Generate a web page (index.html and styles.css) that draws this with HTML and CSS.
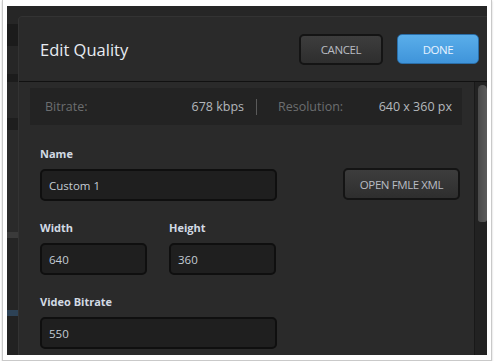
FILE: index.html
```html
<!DOCTYPE html>
<html lang="en">
<head>
    <meta charset="UTF-8">
    <title>Edit Quality</title>
    <link rel="stylesheet" href="styles.css">
</head>
<body>
    <div class="card">
        <div class="screen">
            <div class="dialog">
                <div class="dialog-header">
                    <h1>Edit Quality</h1>
                    <div class="actions">
                        <button class="btn">CANCEL</button>
                        <button class="btn btn-primary">DONE</button>
                    </div>
                </div>
                <div class="dialog-body">
                    <div class="content">
                        <div class="stats">
                            <div class="stat">
                                <span class="stat-label">Bitrate:</span>
                                <span class="stat-value">678 kbps</span>
                            </div>
                            <div class="sep"></div>
                            <div class="stat">
                                <span class="stat-label">Resolution:</span>
                                <span class="stat-value">640 x 360 px</span>
                            </div>
                        </div>
                        <div class="form">
                            <div class="row">
                                <div class="field">
                                    <label>Name</label>
                                    <div class="input wide">Custom 1</div>
                                </div>
                                <button class="btn btn-xml">OPEN FMLE XML</button>
                            </div>
                            <div class="row">
                                <div class="field">
                                    <label>Width</label>
                                    <div class="input small">640</div>
                                </div>
                                <div class="field">
                                    <label>Height</label>
                                    <div class="input small">360</div>
                                </div>
                            </div>
                            <div class="row">
                                <div class="field">
                                    <label>Video Bitrate</label>
                                    <div class="input wide">550</div>
                                </div>
                            </div>
                        </div>
                    </div>
                    <div class="scrollbar">
                        <div class="thumb"></div>
                    </div>
                </div>
            </div>
        </div>
    </div>
</body>
</html>
```

FILE: styles.css
```css
body {
    margin: 0;
    background-color: #fff;
    font-family: "Open Sans", "Liberation Sans", sans-serif;
}

.card {
    margin-left: 2px;
    width: 490px;
    box-sizing: border-box;
    padding: 6px 3px 5px 4px;
    border: 1px solid #c9c9c9;
    border-top: none;
    background-color: #fff;
    box-shadow: 0 1px 2px rgba(0, 0, 0, 0.2);
}

.screen {
    width: 480px;
    height: 349px;
    overflow: hidden;
    background: linear-gradient(to bottom,
        #262626 0, #262626 18px,
        #1b1b1b 18px, #1b1b1b 40px,
        #262626 40px, #262626 68px,
        #1c1c1c 68px, #1c1c1c 76px,
        #282828 76px, #282828 112px,
        #1e1e1e 112px, #1e1e1e 124px,
        #2a2a2a 124px, #2a2a2a 226px,
        #3a3a3a 226px, #3a3a3a 232px,
        #252525 232px, #252525 304px,
        #2d4256 304px, #2d4256 310px,
        #222 310px);
    padding: 11px 0 0 12px;
    box-sizing: border-box;
}

.dialog {
    height: 100%;
    background-color: #2a2a2a;
    border-top-left-radius: 3px;
    box-shadow: -1px 0 0 #333, 0 -1px 0 #333;
    display: flex;
    flex-direction: column;
}

.dialog-header {
    height: 64px;
    flex-shrink: 0;
    display: flex;
    align-items: center;
    justify-content: space-between;
    padding: 0 8px 0 21px;
    border-bottom: 1px solid #111;
}

.dialog-header h1 {
    margin: 0;
    font-size: 16.5px;
    font-weight: normal;
    color: #e8ecf2;
}

.actions {
    display: flex;
    gap: 14px;
    align-items: center;
}

.btn {
    font-family: "Open Sans", "Liberation Sans", sans-serif;
    font-size: 11.5px;
    letter-spacing: -0.4px;
    color: #b8bcc2;
    background: linear-gradient(#3d3d3d, #2e2e2e);
    border: 2px solid #141414;
    border-radius: 5px;
    width: 84px;
    height: 31px;
    padding: 0;
}

.btn-primary {
    width: 82px;
    height: 30px;
    color: #e8f3ff;
    background: linear-gradient(#5aaeea, #3f94da);
    border: 1px solid #2a6ea8;
}

.dialog-body {
    flex: 1;
    display: flex;
    min-height: 0;
}

.content {
    flex: 1;
    padding: 6px 12px 0 11px;
}

.stats {
    height: 37px;
    background-color: #232323;
    display: flex;
    align-items: center;
    padding: 0 10px 0 15px;
    font-size: 12.5px;
}

.stat {
    display: flex;
    justify-content: space-between;
}

.stat:first-child {
    width: 199px;
}

.stat:last-child {
    flex: 1;
}

.stat-label {
    color: #6c6e70;
}

.stat-value {
    color: #b4b8bc;
}

.sep {
    width: 1px;
    height: 16px;
    background-color: #5a5a5a;
    margin: 0 21px 0 12px;
}

.form {
    padding: 22px 0 0 10px;
}

.row {
    display: flex;
    align-items: flex-end;
    gap: 22px;
    margin-bottom: 20px;
}

.field label {
    display: block;
    font-size: 11px;
    font-weight: bold;
    color: #d2dae4;
    line-height: 14px;
    margin-bottom: 8px;
}

.input {
    height: 32px;
    box-sizing: border-box;
    background-color: #1f1f1f;
    border: 2px solid #0f0f0f;
    border-radius: 5px;
    padding: 0 7px;
    display: flex;
    align-items: center;
    font-size: 11.5px;
    color: #c4ccd4;
}

.input.wide {
    width: 237px;
}

.input.small {
    width: 107px;
}

.btn-xml {
    width: 117px;
    height: 32px;
    margin-left: 44px;
    margin-bottom: 1px;
}

.scrollbar {
    width: 13px;
    border-left: 1px solid #191919;
    background-color: #222;
    padding: 3px 0 0 3px;
    box-sizing: border-box;
}

.thumb {
    width: 9px;
    height: 137px;
    border-radius: 5px 5px 3px 3px;
    background: linear-gradient(to right, #4a4a4a, #5c5c5c);
}
```
